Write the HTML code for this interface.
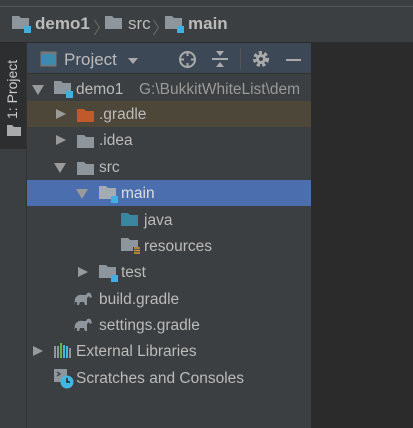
<!DOCTYPE html>
<html><head><meta charset="utf-8"><style>
*{margin:0;padding:0;box-sizing:border-box}
body{width:413px;height:428px;background:#3c3f41;position:relative;overflow:hidden;font-family:"Liberation Sans",sans-serif;color:#bbbbbb}
.a{position:absolute}
.row{position:absolute;left:27px;width:284px;height:26px;font-size:15.5px;line-height:26px;white-space:nowrap;overflow:hidden}
.row span{position:absolute;top:1px}
.row svg{position:absolute}
.tri{position:absolute;top:8px;width:0;height:0}
.tr{border-left:10px solid #9a9a9a;border-top:5.5px solid transparent;border-bottom:5.5px solid transparent}
.td{border-top:10px solid #9a9a9a;border-left:6px solid transparent;border-right:6px solid transparent;top:9px}
</style></head><body>
<div class="a" style="left:0;top:0;width:413px;height:6px;background:#3c3f41"></div>
<div class="a" style="left:0;top:6px;width:413px;height:1px;background:#555"></div>
<div class="a" style="left:0;top:42px;width:413px;height:1px;background:#2b2b2b"></div>
<div class="a" style="left:311px;top:43px;width:102px;height:385px;background:#2b2b2b"></div>
<div class="a" style="left:0;top:43px;width:26px;height:106px;background:#2c2e2f"></div>
<div class="a" style="left:26px;top:43px;width:1px;height:385px;background:#323232"></div>

<!-- breadcrumb -->
<svg class="a" style="left:12px;top:16px" width="20" height="17"><path d="M0 0h7l2 2h8v11H0z" fill="#8d969c"/><rect x="12" y="10" width="7" height="7" fill="#3fb0e0"/></svg>
<div class="a" style="left:35px;top:14px;font-size:17px;font-weight:bold;color:#bbb">demo1</div>
<div class="a" style="left:93px;top:14px;font-size:17px;color:#666">〉</div>
<svg class="a" style="left:105px;top:16px" width="18" height="14"><path d="M0 0h7l2 2h8v11H0z" fill="#8d969c"/></svg>
<div class="a" style="left:128px;top:14px;font-size:17px;color:#bbb">src</div>
<div class="a" style="left:152px;top:14px;font-size:17px;color:#666">〉</div>
<svg class="a" style="left:165px;top:16px" width="20" height="17"><path d="M0 0h7l2 2h8v11H0z" fill="#8d969c"/><rect x="12" y="10" width="7" height="7" fill="#3fb0e0"/></svg>
<div class="a" style="left:188px;top:14px;font-size:17px;font-weight:bold;color:#bbb">main</div>

<!-- vertical tab -->
<div class="a" style="left:4px;top:119px;transform:rotate(-90deg);transform-origin:0 0;font-size:14px;color:#ccc;white-space:nowrap">1: Project</div>
<svg class="a" style="left:7px;top:125px" width="14" height="11"><path d="M0 0h5l2 2h7v9H0z" fill="#aaa"/></svg>

<!-- header -->
<div class="a" style="left:27px;top:43px;width:284px;height:31px;background:#3d4856"></div>
<div class="a" style="left:27px;top:73px;width:284px;height:1px;background:#323232"></div>
<svg class="a" style="left:40px;top:51px" width="17" height="16"><rect x="0.5" y="0.5" width="16" height="15" fill="#777" /><rect x="2" y="3" width="13" height="11" fill="#3c8ab0"/></svg>
<div class="a" style="left:64px;top:50px;font-size:17px;color:#bbb">Project</div>
<div class="a" style="left:128px;top:58px;border-top:6px solid #aaa;border-left:5px solid transparent;border-right:5px solid transparent"></div>
<svg class="a" style="left:178px;top:50px" width="19" height="19" fill="none" stroke="#aaa" stroke-width="2"><circle cx="9.5" cy="9.5" r="7.5"/><path d="M9.5 2v4M9.5 13v4M2 9.5h4M13 9.5h4"/></svg>
<svg class="a" style="left:212px;top:50px" width="17" height="18" fill="#aaa"><rect x="0" y="8" width="16" height="2"/><path d="M4 1h8l-4 5z M4 17h8l-4-5z"/></svg>
<div class="a" style="left:240px;top:48px;width:1px;height:22px;background:#555"></div>
<svg class="a" style="left:252px;top:50px" width="18" height="18"><circle cx="9" cy="9" r="6" fill="none" stroke="#aaa" stroke-width="4" stroke-dasharray="3 2.2"/><circle cx="9" cy="9" r="5" fill="#aaa"/><circle cx="9" cy="9" r="2" fill="#3d4856"/></svg>
<div class="a" style="left:286px;top:59px;width:15px;height:2px;background:#aaa"></div>

<!-- tree -->
<div class="row" style="top:76px"><div class="tri td" style="left:5px"></div>
<svg style="left:27px;top:5px" width="20" height="17"><path d="M0 0h7l2 2h8v11H0z" fill="#8d969c"/><rect x="12" y="10" width="7" height="7" fill="#3fb0e0"/></svg>
<span style="left:49px">demo1</span><span style="left:112px;color:#999">G:\BukkitWhiteList\dem</span></div>

<div class="row" style="top:101px;background:#4d473a"><div class="tri tr" style="left:29px"></div>
<svg style="left:50px;top:8px" width="18" height="13"><path d="M0 0h7l2 2h8v11H0z" fill="#c05a2b"/></svg>
<span style="left:72px">.gradle</span></div>

<div class="row" style="top:127px"><div class="tri tr" style="left:29px"></div>
<svg style="left:50px;top:8px" width="18" height="13"><path d="M0 0h7l2 2h8v11H0z" fill="#8d969c"/></svg>
<span style="left:72px">.idea</span></div>

<div class="row" style="top:154px"><div class="tri td" style="left:27px"></div>
<svg style="left:50px;top:8px" width="18" height="13"><path d="M0 0h7l2 2h8v11H0z" fill="#8d969c"/></svg>
<span style="left:72px">src</span></div>

<div class="row" style="top:180px;background:#4b6eaf;color:#ddd"><div class="tri td" style="left:49px"></div>
<svg style="left:72px;top:6px" width="20" height="17"><path d="M0 0h7l2 2h8v11H0z" fill="#a3acb3"/><rect x="12" y="10" width="7" height="7" fill="#3fb0e0"/></svg>
<span style="left:94px">main</span></div>

<div class="row" style="top:207px">
<svg style="left:94px;top:6px" width="18" height="13"><path d="M0 0h7l2 2h8v11H0z" fill="#3a86a1"/></svg>
<span style="left:117px">java</span></div>

<div class="row" style="top:233px">
<svg style="left:94px;top:5px" width="20" height="17"><path d="M0 0h7l2 2h8v11H0z" fill="#8d969c"/><rect x="12" y="9" width="7" height="8" fill="#3c3f41"/><path d="M13 10h6M13 12.5h6M13 15h6" stroke="#d19a3a" stroke-width="1.5"/></svg>
<span style="left:117px">resources</span></div>

<div class="row" style="top:259px"><div class="tri tr" style="left:51px"></div>
<svg style="left:72px;top:6px" width="20" height="17"><path d="M0 0h7l2 2h8v11H0z" fill="#8d969c"/><rect x="12" y="10" width="7" height="7" fill="#3fb0e0"/></svg>
<span style="left:94px">test</span></div>

<div class="row" style="top:286px">
<svg style="left:46px;top:5px" width="20" height="15"><path d="M1 14l1-6c1-3 4-5 8-4l3 0c1-3 4-3 5-1l1 3-2 1-1-2-2 2 0 7h-2l-1-3h-4l-1 3h-2l0-3-2 0-1 3z" fill="#8d969c"/></svg>
<span style="left:72px">build.gradle</span></div>

<div class="row" style="top:312px">
<svg style="left:46px;top:5px" width="20" height="15"><path d="M1 14l1-6c1-3 4-5 8-4l3 0c1-3 4-3 5-1l1 3-2 1-1-2-2 2 0 7h-2l-1-3h-4l-1 3h-2l0-3-2 0-1 3z" fill="#8d969c"/></svg>
<span style="left:72px">settings.gradle</span></div>

<div class="row" style="top:338px"><div class="tri tr" style="left:6px"></div>
<svg style="left:27px;top:5px" width="18" height="15"><rect x="0" y="3" width="2" height="12" fill="#8d969c"/><rect x="3" y="3" width="2" height="12" fill="#8d969c"/><rect x="6" y="0" width="2" height="15" fill="#62b543"/><rect x="9" y="2" width="2" height="13" fill="#40b6e0"/><rect x="12" y="3" width="2" height="12" fill="#40b6e0"/><rect x="15" y="5" width="2" height="10" fill="#8d969c"/></svg>
<span style="left:49px">External Libraries</span></div>

<div class="row" style="top:365px">
<svg style="left:27px;top:4px" width="20" height="20"><rect x="0" y="0" width="13" height="13" fill="#8d969c"/><path d="M3 3l3 2-3 2" stroke="#3c3f41" fill="none" stroke-width="1.3"/><circle cx="13" cy="13" r="6.5" fill="#40b6e0"/><path d="M13 9v4h3" stroke="#222" stroke-width="1.5" fill="none"/></svg>
<span style="left:49px">Scratches and Consoles</span></div>
</body></html>
